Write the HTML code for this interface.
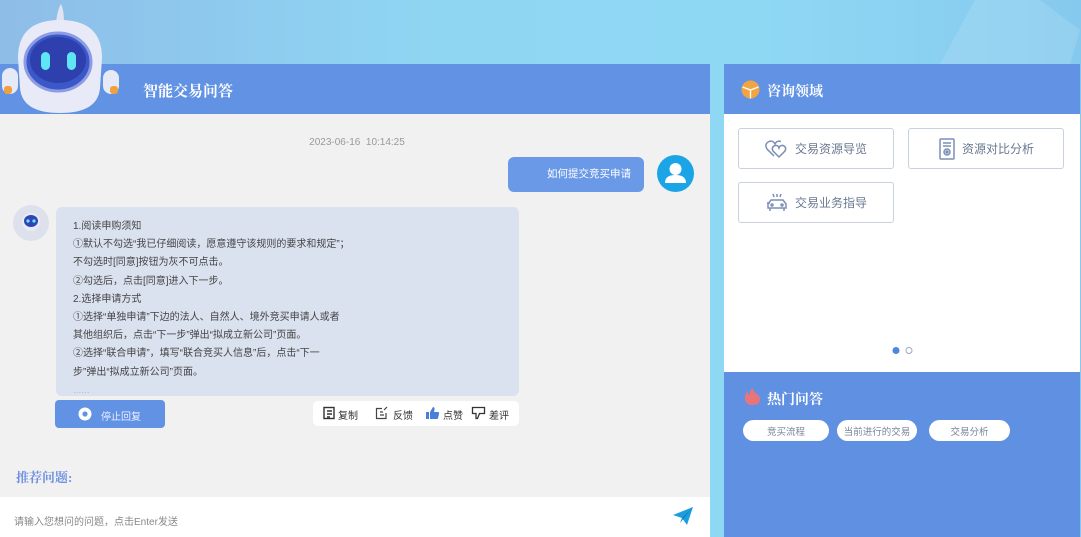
<!DOCTYPE html>
<html><head><meta charset="utf-8"><style>
*{margin:0;padding:0;box-sizing:border-box}
body{width:1081px;height:537px;overflow:hidden;position:relative;font-family:"Liberation Sans","Noto Sans CJK SC",sans-serif;background:linear-gradient(90deg,#8ebde8 0%,#8fd6f3 40%,#8fd8f4 70%,#86c9ee 100%)}
.serif{font-family:"Liberation Serif","Noto Serif CJK SC",serif;font-weight:bold}
.abs{position:absolute}
.lp{left:0;top:64px;width:710px;height:473px;background:#f1f1f1}
.lh{left:0;top:64px;width:710px;height:50px;background:#6192e4}
.rh{left:724px;top:64px;width:356px;height:50px;background:#6192e4}
.rb{left:724px;top:114px;width:356px;height:258px;background:#fff}
.rhot{left:724px;top:372px;width:356px;height:165px;background:#6090e2}
.card{position:absolute;width:156px;height:41px;border:1px solid #c9d1dd;border-radius:3px;background:#fff;display:flex;align-items:center;justify-content:center;font-size:12px;color:#6a7890;gap:6px}
.pill{position:absolute;top:420px;height:21px;border-radius:11px;background:#fff;font-size:9.5px;color:#7a8699;display:flex;align-items:center;justify-content:center}
.msg{left:56px;top:207px;width:463px;height:189px;background:#dae1ef;border-radius:6px;padding:11px 0 0 17px;font-size:10px;line-height:18.2px;color:#444}
</style></head><body>
<svg class="abs" style="left:880px;top:0" width="200" height="64"><polygon points="60,64 95,0 160,0 200,30 190,64" fill="#ffffff" opacity=".12"/></svg>
<div class="abs lp"></div>
<div class="abs lh"></div>
<div class="abs serif" style="left:143px;top:80px;font-size:15px;color:#fff">智能交易问答</div>
<svg class="abs" style="left:0;top:0" width="120" height="115" viewBox="0 0 120 115">
<path d="M56 22 Q58 8 61 4 Q64 10 64 22 Z" fill="#dfe3f2"/>
<rect x="2" y="68" width="16" height="26" rx="8" fill="#e6e9f6"/>
<rect x="103" y="70" width="16" height="24" rx="8" fill="#e6e9f6"/>
<rect x="4" y="86" width="8" height="8" rx="3" fill="#f0a040"/>
<rect x="110" y="86" width="8" height="8" rx="3" fill="#f0a040"/>
<path d="M18 58 Q18 20 60 20 Q102 20 102 58 L100 88 Q98 113 60 113 Q22 113 20 88 Z" fill="#e8eaf7"/>
<ellipse cx="58" cy="62" rx="33" ry="29" fill="#3b58c8" stroke="#8c9be4" stroke-width="3"/>
<ellipse cx="58" cy="60" rx="28" ry="23" fill="#2e3fae"/>
<rect x="41" y="52" width="9" height="18" rx="4.5" fill="#5fe6f5"/>
<rect x="67" y="52" width="9" height="18" rx="4.5" fill="#5fe6f5"/>
</svg>
<div class="abs" style="left:0;top:137px;width:710px;text-align:center;font-size:10px;color:#999;padding-left:4px">2023-06-16 &nbsp;10:14:25</div>
<div class="abs" style="left:508px;top:157px;width:136px;height:35px;background:#6a99e8;border-radius:6px;color:#fff;font-size:10.5px;line-height:35px;text-align:right;padding-right:13px">如何提交竞买申请</div>
<svg class="abs" style="left:657px;top:155px" width="37" height="37"><circle cx="18.5" cy="18.5" r="18.5" fill="#1ca5e6"/><circle cx="18.5" cy="14" r="6" fill="#fff"/><path d="M8 28 Q8 20 18.5 20 Q29 20 29 28 Z" fill="#fff"/></svg>
<svg class="abs" style="left:13px;top:205px" width="36" height="36"><circle cx="18" cy="18" r="18" fill="#dde1ec"/><circle cx="18" cy="17" r="9" fill="#e9ebf6"/><ellipse cx="18" cy="16" rx="7" ry="6" fill="#2f45b8"/><circle cx="15" cy="16" r="1.6" fill="#6ee"/><circle cx="21" cy="16" r="1.6" fill="#6ee"/></svg>
<div class="abs msg">1.阅读申购须知<br>①默认不勾选“我已仔细阅读，愿意遵守该规则的要求和规定”；<br>不勾选时[同意]按钮为灰不可点击。<br>②勾选后，点击[同意]进入下一步。<br>2.选择申请方式<br>①选择“单独申请”下边的法人、自然人、境外竞买申请人或者<br>其他组织后，点击“下一步”弹出“拟成立新公司”页面。<br>②选择“联合申请”，填写“联合竞买人信息”后，点击“下一<br>步”弹出“拟成立新公司”页面。<br><span style="color:#bbb">......</span></div>
<div class="abs" style="left:55px;top:400px;width:110px;height:28px;background:#6192e4;border-radius:4px;color:#eef;font-size:10px;padding:8px 0 0 46px">停止回复</div>
<svg class="abs" style="left:78px;top:407px" width="14" height="14"><circle cx="7" cy="7" r="6.5" fill="#fff"/><circle cx="7" cy="7" r="2.6" fill="#6192e4"/></svg>
<div class="abs" style="left:313px;top:401px;width:206px;height:25px;background:#fff;border-radius:5px;font-size:10px;color:#333">
<svg class="abs" style="left:9px;top:5px" width="14" height="14" fill="none" stroke="#333" stroke-width="1.4"><rect x="2" y="1.5" width="10" height="11"/><path d="M5 5h5M5 8h5M5 11h3"/></svg><span class="abs" style="left:25px;top:6px">复制</span>
<svg class="abs" style="left:62px;top:5px" width="14" height="14" fill="none" stroke="#444" stroke-width="1.2"><path d="M11 7v5.5H1.5V2.5H7M5 6h3M5 9h4M9 4l3-3"/></svg><span class="abs" style="left:80px;top:6px">反馈</span>
<svg class="abs" style="left:112px;top:5px" width="15" height="14"><rect x="1" y="6" width="3" height="7" fill="#4a7fd8"/><path d="M5 6 L8 1 Q10 1 9.5 4 L9 6 H13 Q14.5 6 14 8 L13 12.5 Q12.7 13 12 13 H5 Z" fill="#4a7fd8"/></svg><span class="abs" style="left:130px;top:6px">点赞</span>
<svg class="abs" style="left:158px;top:5px" width="15" height="14" fill="none" stroke="#333" stroke-width="1.3"><path d="M1.5 1.5h12v6h-5l-2 5h-1.5v-5h-3.5z"/></svg><span class="abs" style="left:176px;top:6px">差评</span>
</div>
<div class="abs serif" style="left:16px;top:467px;font-size:13px;color:#6f8fe0">推荐问题:</div>
<div class="abs" style="left:0;top:497px;width:710px;height:40px;background:#fff"></div>
<div class="abs" style="left:14px;top:513px;font-size:10px;color:#888">请输入您想问的问题，点击Enter发送</div>
<svg class="abs" style="left:672px;top:506px" width="22" height="20"><path d="M1 9 L21 1 L15 19 L10 12 Z" fill="#1b9ee0"/><path d="M10 12 L21 1 L8 17 Z" fill="#1380c0"/></svg>

<div class="abs rh"></div>
<svg class="abs" style="left:741px;top:80px" width="19" height="19"><circle cx="9.5" cy="9.5" r="9" fill="#f2a443"/><path d="M1.5 7 L9.5 10 L17.5 7 M9.5 10 V18.5" stroke="#fff" stroke-width="1.3" fill="none"/></svg>
<div class="abs serif" style="left:767px;top:81px;font-size:14px;color:#fff">咨询领域</div>
<div class="abs rb"></div>
<div class="card" style="left:738px;top:128px"><svg width="24" height="20" fill="none" stroke="#7b8fb5" stroke-width="1.5"><path d="M9 17 L2 10 Q-1 5 4 2.5 Q8 1 10 5 Q12 1 16 2.5"/><path d="M14 18 L8 12 Q6 8 10 6.5 Q13 6 14 9 Q15 6 18 6.5 Q22 8 20 12 Z"/></svg>交易资源导览</div>
<div class="card" style="left:908px;top:128px"><svg width="18" height="22" fill="none" stroke="#7b8fb5" stroke-width="1.5"><rect x="2" y="1" width="14" height="20" rx="1"/><path d="M5 5h8M5 8h8"/><circle cx="9" cy="14" r="3"/><circle cx="9" cy="14" r="1" fill="#7b8fb5"/></svg>资源对比分析</div>
<div class="card" style="left:738px;top:182px"><svg width="24" height="20" fill="none" stroke="#7b8fb5" stroke-width="1.5"><path d="M3 15 V11 L6 7 H18 L21 11 V15 Z M5 15 v3 M19 15 v3 M2 10 H5"/><circle cx="7" cy="12" r="1"/><circle cx="17" cy="12" r="1"/><path d="M9 4 L8 1 M12 4 V1 M15 4 L16 1"/></svg>交易业务指导</div>
<svg class="abs" style="left:891px;top:346px" width="24" height="9"><circle cx="5" cy="4.5" r="3.5" fill="#4f84e0"/><circle cx="18" cy="4.5" r="3" fill="none" stroke="#9ab" stroke-width="1"/></svg>
<div class="abs rhot"></div>
<svg class="abs" style="left:744px;top:387px" width="17" height="19"><path d="M8.5 18 Q1 18 1 11 Q1 6 4 4 Q4 8 6 8 Q5 3 9 1 Q9 5 13 7 Q16 9 16 12 Q16 18 8.5 18Z" fill="#e8757b"/></svg>
<div class="abs serif" style="left:767px;top:389px;font-size:14px;color:#fff">热门问答</div>
<div class="pill" style="left:743px;width:86px">竞买流程</div>
<div class="pill" style="left:837px;width:80px">当前进行的交易</div>
<div class="pill" style="left:929px;width:81px">交易分析</div>
</body></html>
